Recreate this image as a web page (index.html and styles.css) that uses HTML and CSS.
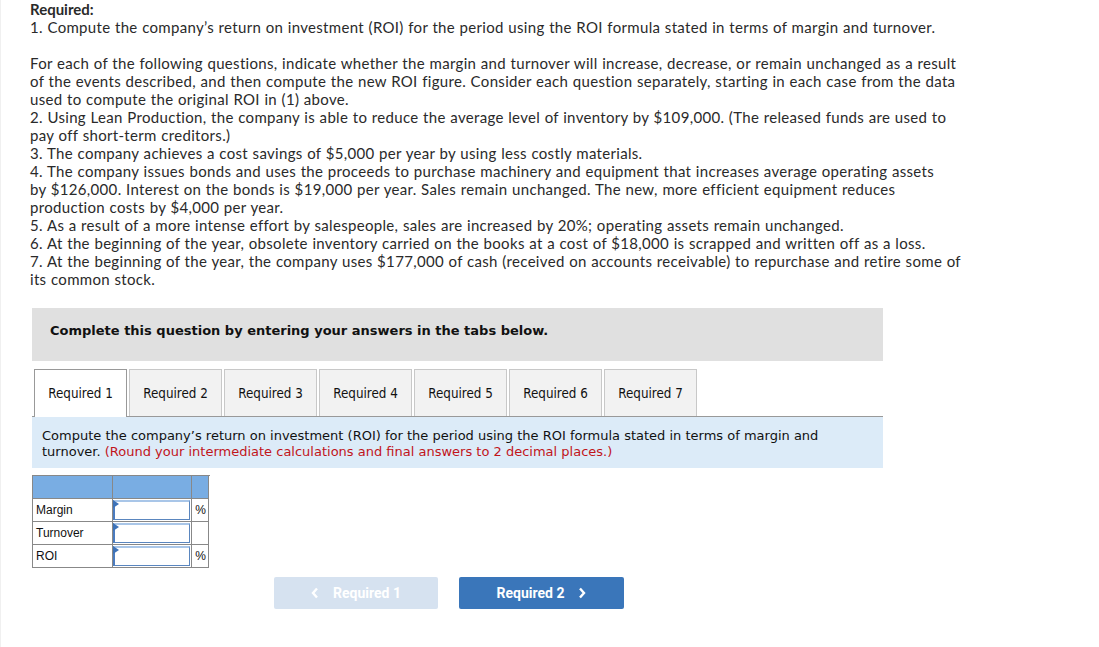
FILE: index.html
```html
<!DOCTYPE html>
<html>
<head>
<meta charset="utf-8">
<link rel="stylesheet" href="styles.css">
</head>
<body>
<div class="page">
  <div class="intro">
    <div class="req-title">Required:</div>
    <div>1. Compute the company’s return on investment (ROI) for the period using the ROI formula stated in terms of margin and turnover.</div>
    <div class="blank"></div>
    <div>For each of the following questions, indicate whether the margin and turnover will increase, decrease, or remain unchanged as a result<br>of the events described, and then compute the new ROI figure. Consider each question separately, starting in each case from the data<br>used to compute the original ROI in (1) above.</div>
    <div>2. Using Lean Production, the company is able to reduce the average level of inventory by $109,000. (The released funds are used to<br>pay off short-term creditors.)</div>
    <div>3. The company achieves a cost savings of $5,000 per year by using less costly materials.</div>
    <div>4. The company issues bonds and uses the proceeds to purchase machinery and equipment that increases average operating assets<br>by $126,000. Interest on the bonds is $19,000 per year. Sales remain unchanged. The new, more efficient equipment reduces<br>production costs by $4,000 per year.</div>
    <div>5. As a result of a more intense effort by salespeople, sales are increased by 20%; operating assets remain unchanged.</div>
    <div>6. At the beginning of the year, obsolete inventory carried on the books at a cost of $18,000 is scrapped and written off as a loss.</div>
    <div>7. At the beginning of the year, the company uses $177,000 of cash (received on accounts receivable) to repurchase and retire some of<br>its common stock.</div>
  </div>

  <div class="question">
    <div class="banner">Complete this question by entering your answers in the tabs below.</div>

    <div class="tabs">
      <div class="tab active">Required 1</div>
      <div class="tab">Required 2</div>
      <div class="tab">Required 3</div>
      <div class="tab">Required 4</div>
      <div class="tab">Required 5</div>
      <div class="tab">Required 6</div>
      <div class="tab">Required 7</div>
    </div>

    <div class="instructions">Compute the company’s return on investment (ROI) for the period using the ROI formula stated in terms of margin and<br>turnover. <span class="red">(Round your intermediate calculations and final answers to 2 decimal places.)</span></div>

    <div class="answers">
      <div class="cell head"></div><div class="cell head"></div><div class="cell head"></div>
      <div class="cell label">Margin</div><div class="cell input"><div class="field"></div></div><div class="cell unit">%</div>
      <div class="cell label">Turnover</div><div class="cell input"><div class="field"></div></div><div class="cell unit"></div>
      <div class="cell label">ROI</div><div class="cell input"><div class="field"></div></div><div class="cell unit">%</div>
    </div>

    <div class="nav">
      <div class="btn btn-prev"><svg class="chev left" width="8" height="12" viewBox="0 0 8 12"><polyline points="6,1.5 2,6 6,10.5" fill="none" stroke="#fff" stroke-width="2.4"/></svg>Required 1</div>
      <div class="btn btn-next">Required 2<svg class="chev right" width="8" height="12" viewBox="0 0 8 12"><polyline points="2,1.5 6,6 2,10.5" fill="none" stroke="#fff" stroke-width="2.4"/></svg></div>
    </div>
  </div>
</div>
</body>
</html>
```

FILE: styles.css
```css
html, body {
  margin: 0;
  padding: 0;
  background: #fff;
}

.page {
  padding: 0 0 40px 29px;
  border-left: 1px solid #f0f0f0;
  box-sizing: border-box;
  width: 1099px;
}

.intro {
  font-family: "Lato", "Liberation Sans", sans-serif;
  font-size: 15px;
  letter-spacing: 0.32px;
  word-spacing: 0.4px;
  line-height: 18px;
  color: #2a2a2a;
}

.req-title {
  font-weight: bold;
  letter-spacing: 0;
}

.blank {
  height: 18px;
}

.question {
  margin-top: 20px;
  margin-left: 2px;
  width: 851px;
}

.banner {
  background: #e0e0e0;
  height: 53px;
  box-sizing: border-box;
  padding: 15px 0 0 18px;
  font-family: "DejaVu Sans", Verdana, sans-serif;
  font-weight: bold;
  font-size: 13px;
  color: #111;
}

.tabs {
  display: flex;
  gap: 2px;
  margin-top: 8px;
  padding-left: 2px;
  border-bottom: 1px solid #999;
}

.tab {
  width: 93px;
  height: 47px;
  box-sizing: border-box;
  border: 1px solid #c8c8c8;
  border-bottom: none;
  background: #f2f2f2;
  display: flex;
  align-items: center;
  justify-content: center;
  font-family: "DejaVu Sans Condensed", "DejaVu Sans", sans-serif;
  font-size: 13.3px;
  color: #111;
}

.tab.active {
  background: #fff;
  border-color: #999;
  margin-bottom: -1px;
  height: 48px;
}

.instructions {
  background: #dcebf8;
  padding: 11px 10px 8px 10px;
  font-family: "DejaVu Sans", Verdana, sans-serif;
  font-size: 13px;
  line-height: 16px;
  color: #111;
}

.red {
  color: #c1151b;
}

.answers {
  margin-top: 7px;
  display: grid;
  grid-template-columns: 80px 79px 17px;
  grid-auto-rows: 23px;
  width: 177px;
  border-top: 1px solid #888;
  border-left: 1px solid #888;
  font-family: "Liberation Sans", Arial, sans-serif;
  font-size: 12px;
  color: #111;
}

.cell {
  border-right: 1px solid #888;
  border-bottom: 1px solid #888;
  display: flex;
  align-items: center;
  box-sizing: border-box;
}

.cell.head {
  background: #79ade3;
}

.cell.label {
  padding-left: 3px;
}

.cell.unit {
  justify-content: center;
  padding-left: 1px;
}

.cell.input {
  padding: 1px 1px 1px 0;
  align-items: stretch;
}

.field {
  position: relative;
  flex: 1;
  border: 1px solid #5a86bf;
  border-top: 2px solid #a9c6e8;
  border-left: 2px solid #4b7cc0;
  box-sizing: border-box;
  background: #fff;
}

.field::before {
  content: "";
  position: absolute;
  left: -2px;
  top: -2px;
  border-top: 4px solid transparent;
  border-bottom: 4px solid transparent;
  border-left: 6px solid #3d72b8;
}

.nav {
  display: flex;
  gap: 21px;
  margin-top: 9px;
  margin-left: 242px;
}

.btn {
  width: 165px;
  height: 32px;
  border-radius: 2px;
  display: flex;
  align-items: center;
  justify-content: center;
  font-family: "Roboto", "Liberation Sans", sans-serif;
  font-weight: bold;
  font-size: 14px;
  color: #fff;
}

.btn-prev {
  background: #d6e2f0;
  width: 164px;
}

.btn-next {
  background: #3a76ba;
}

.chev.left {
  margin-right: 14px;
}

.chev.right {
  margin-left: 14px;
}
```
